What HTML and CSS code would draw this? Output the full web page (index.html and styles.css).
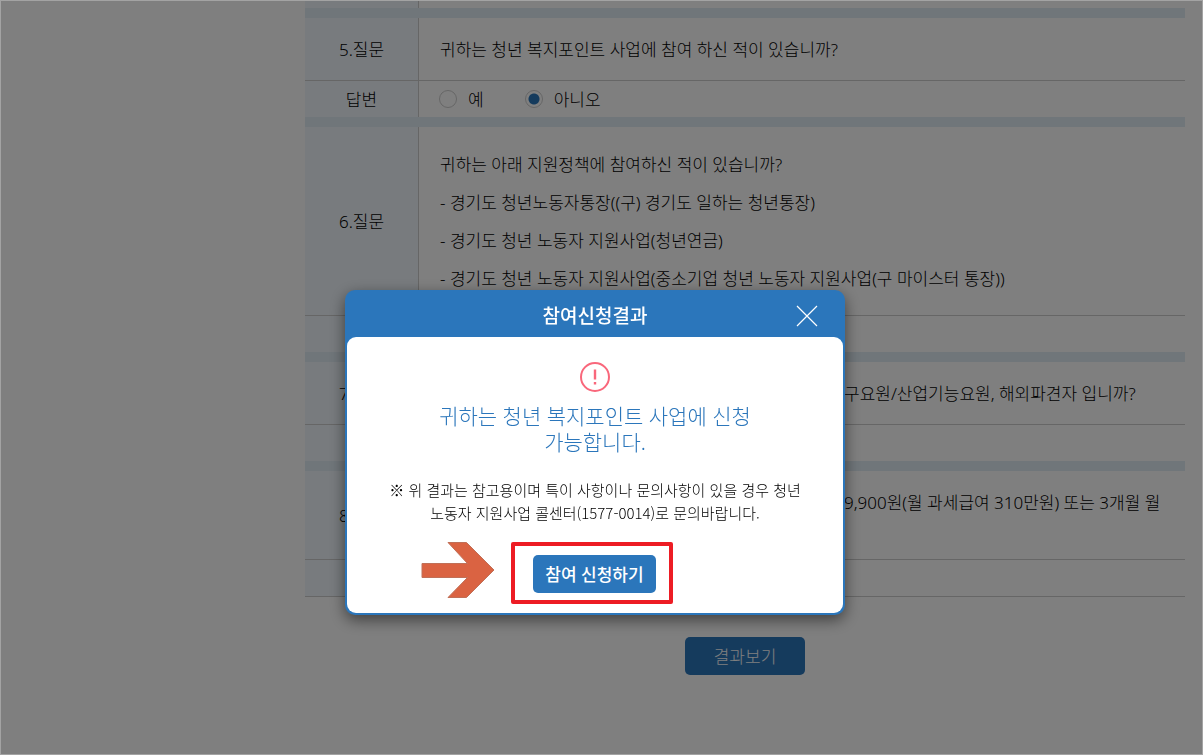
FILE: index.html
```html
<!DOCTYPE html>
<html lang="ko">
<head>
<meta charset="utf-8">
<meta name="viewport" content="width=device-width, initial-scale=1">
<title>참여신청결과</title>
<link rel="stylesheet" href="styles.css">
</head>
<body>
<main class="page">
  <table class="survey">
    <colgroup><col class="col-label"><col></colgroup>
    <tbody>
      <tr class="stub"><th></th><td></td></tr>
      <tr class="band"><td colspan="2"></td></tr>
      <tr class="question"><th scope="row">5.질문</th><td><p>귀하는 청년 복지포인트 사업에 참여 하신 적이 있습니까?</p></td></tr>
      <tr class="answer"><th scope="row">답변</th><td><div class="choices"><label class="choice"><input type="radio" name="q5">예</label><label class="choice"><input type="radio" name="q5" checked>아니오</label></div></td></tr>
      <tr class="band"><td colspan="2"></td></tr>
      <tr class="question question-list"><th scope="row">6.질문</th><td>
        <p>귀하는 아래 지원정책에 참여하신 적이 있습니까?</p>
        <p>- 경기도 청년노동자통장((구) 경기도 일하는 청년통장)</p>
        <p>- 경기도 청년 노동자 지원사업(청년연금)</p>
        <p>- 경기도 청년 노동자 지원사업(중소기업 청년 노동자 지원사업(구 마이스터 통장))</p>
      </td></tr>
      <tr class="answer"><th scope="row"></th><td></td></tr>
      <tr class="band"><td colspan="2"></td></tr>
      <tr class="question"><th scope="row">7.질문</th><td><p class="tail">구요원/산업기능요원, 해외파견자 입니까?</p></td></tr>
      <tr class="answer"><th scope="row"></th><td></td></tr>
      <tr class="band"><td colspan="2"></td></tr>
      <tr class="question question-tall"><th scope="row">8.질문</th><td><p class="tail">9,900원(월 과세급여 310만원) 또는 3개월 월</p></td></tr>
      <tr class="answer last"><th scope="row"></th><td></td></tr>
    </tbody>
  </table>
  <button class="btn result-btn" type="button">결과보기</button>
</main>

<div class="overlay">
  <section class="modal" role="dialog" aria-modal="true" aria-labelledby="modal-title">
    <header class="modal-head">
      <h2 id="modal-title">참여신청결과</h2>
      <button class="close" type="button" aria-label="닫기">
        <svg width="22" height="22" viewBox="0 0 22 22"><path d="M1 1 21 21M21 1 1 21" stroke="#fff" stroke-width="1.2" fill="none"/></svg>
      </button>
    </header>
    <div class="modal-body">
      <svg class="alert" width="30" height="30" viewBox="0 0 30 30"><circle cx="15" cy="15" r="14" fill="none" stroke="#f9677b" stroke-width="2"/><path d="M15 7.500V17.500M15 20V22.500" stroke="#f9677b" stroke-width="2.400"/></svg>
      <p class="message">귀하는 청년 복지포인트 사업에 신청<br>가능합니다.</p>
      <p class="note">※ 위 결과는 참고용이며 특이 사항이나 문의사항이 있을 경우 청년<br>노동자 지원사업 콜센터(1577-0014)로 문의바랍니다.</p>
      <div class="action">
        <button class="btn apply-btn" type="button">참여 신청하기</button>
        <span class="highlight"></span>
        <svg class="arrow" width="74" height="58" viewBox="0 0 74 58"><path d="M1 22.500H46.500L27 1.500H45.500L73 29 45.500 56.500H27L46.500 36.500H1Z" fill="#da6342" stroke="#c07058" stroke-width="1"/></svg>
      </div>
    </div>
  </section>
</div>
</body>
</html>
```
FILE: styles.css
```css
* { box-sizing: border-box; }

body {
  margin: 0;
  background: #fff;
  color: #000;
  font-family: "Noto Sans", "Noto Sans CJK KR", sans-serif;
  font-size: 17px;
  font-weight: 300;
  line-height: 26px;
}

p, h2 { margin: 0; }

button { font: inherit; cursor: pointer; }

.page {
  display: flex;
  flex-direction: column;
  align-items: center;
  padding: 1px 18px 40px 305px;
}

.survey {
  width: 100%;
  table-layout: fixed;
  border-spacing: 0;
}

.col-label { width: 114px; }

.survey th {
  padding: 2px 0 0;
  background: #f0f7fc;
  border-right: 1px solid #ccc;
  font-weight: 300;
}

.survey td { padding: 0 0 0 20px; }

.stub th { height: 7px; }

.survey .band td {
  height: 10px;
  padding: 0;
  background: #e0ecf4;
}

.survey .question td { padding: 13px 0 11px 21px; }
.survey .question-list td { padding: 19px 0 17px 21px; }
.question p { padding: 6px 0; white-space: nowrap; }

.survey .question-tall td {
  height: 88px;
  vertical-align: top;
}

.survey .question .tail { padding-left: 404px; }

.answer th, .answer td {
  height: 37px;
  border-top: 1px solid #ccc;
}

.last th, .last td {
  height: 38px;
  border-bottom: 1px solid #ccc;
}

.choices { display: flex; gap: 41px; padding-top: 2px; }

.choice { display: flex; align-items: center; gap: 11px; }

.choice input {
  appearance: none;
  width: 18px;
  height: 18px;
  margin: 0 0 3px;
  border: 1px solid #ccc;
  border-radius: 50%;
}

.choice input:checked {
  background: radial-gradient(circle, #2b76bb 5px, transparent 6px);
}

.btn {
  height: 38px;
  padding: 2px 0 0;
  border: 0;
  border-radius: 5px;
  background: #2b76bb;
  color: #fff;
}

.result-btn { width: 120px; margin-top: 40px; }

.overlay {
  position: fixed;
  inset: 0;
  display: flex;
  justify-content: center;
  align-items: flex-start;
  padding: 289px 13px 0 0;
  border: 1px solid #a3a3a3;
  background: rgba(0, 0, 0, 0.5);
  background-clip: padding-box;
}

.modal {
  width: 500px;
  padding: 0 2px 2px;
  border-radius: 10px;
  background: #2b76bb;
  box-shadow: 0 5px 15px rgba(0, 0, 0, 0.5);
}

.modal-head {
  display: grid;
  grid-template-columns: 1fr auto 1fr;
  align-items: center;
  height: 47px;
  padding: 4px 25px 0;
  color: #fff;
}

.modal-head h2 {
  grid-column: 2;
  font-size: 19px;
  font-weight: 500;
}

.close {
  display: flex;
  justify-self: end;
  padding: 0;
  border: 0;
  background: none;
}

.modal-body {
  display: flex;
  flex-direction: column;
  align-items: center;
  padding: 25px 20px 20px;
  border-radius: 9px;
  background: #fff;
  text-align: center;
}

.message {
  margin-top: 11px;
  color: #2b76bb;
  font-size: 21px;
}

.note {
  margin-top: 23px;
  font-family: "Noto Sans CJK KR", sans-serif;
  font-size: 15px;
  line-height: 23px;
}

.action { position: relative; margin: 31px 1px 0 0; }

.apply-btn {
  display: block;
  width: 123px;
  font-weight: 500;
}

.highlight {
  position: absolute;
  inset: -13px -17px -11px -22px;
  border: 4px solid #ed1c24;
  border-radius: 2px;
  pointer-events: none;
}

.arrow {
  position: absolute;
  top: -14px;
  left: -112px;
}
```
